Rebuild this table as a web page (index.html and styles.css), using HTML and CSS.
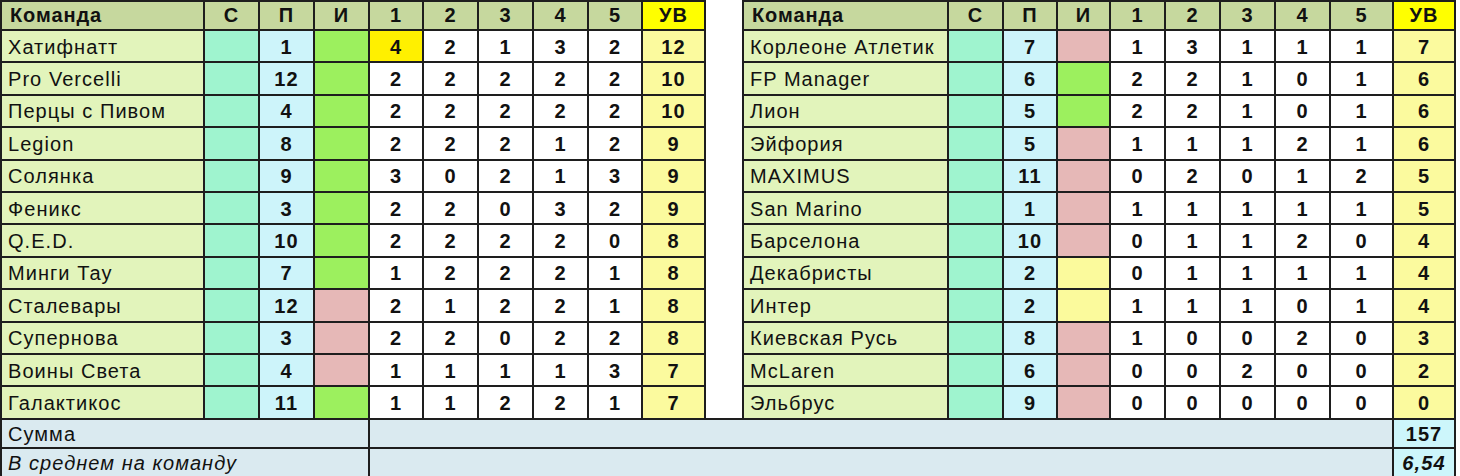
FILE: index.html
```html
<!DOCTYPE html>
<html lang="ru">
<head>
<meta charset="utf-8">
<title>Таблица</title>
<link rel="stylesheet" href="styles.css">
</head>
<body>
<div class="sheet">
  <!-- header -->
  <div class="cell head name first top">Команда</div><div class="cell head top">С</div><div class="cell head top">П</div><div class="cell head top">И</div><div class="cell head top">1</div><div class="cell head top">2</div><div class="cell head top">3</div><div class="cell head top">4</div><div class="cell head top">5</div><div class="cell head uvh top">УВ</div>
  <div class="gap"></div>
  <div class="cell head name right top">Команда</div><div class="cell head top">С</div><div class="cell head top">П</div><div class="cell head top">И</div><div class="cell head top">1</div><div class="cell head top">2</div><div class="cell head top">3</div><div class="cell head top">4</div><div class="cell head top">5</div><div class="cell head uvh top">УВ</div>

  <div class="cell name first">Хатифнатт</div><div class="cell c"></div><div class="cell p">1</div><div class="cell ig"></div><div class="cell s hl">4</div><div class="cell s">2</div><div class="cell s">1</div><div class="cell s">3</div><div class="cell s">2</div><div class="cell uv">12</div>
  <div class="gap"></div>
  <div class="cell name right">Корлеоне Атлетик</div><div class="cell c"></div><div class="cell p">7</div><div class="cell ip"></div><div class="cell s">1</div><div class="cell s">3</div><div class="cell s">1</div><div class="cell s">1</div><div class="cell s">1</div><div class="cell uv">7</div>

  <div class="cell name first">Pro Vercelli</div><div class="cell c"></div><div class="cell p">12</div><div class="cell ig"></div><div class="cell s">2</div><div class="cell s">2</div><div class="cell s">2</div><div class="cell s">2</div><div class="cell s">2</div><div class="cell uv">10</div>
  <div class="gap"></div>
  <div class="cell name right">FP Manager</div><div class="cell c"></div><div class="cell p">6</div><div class="cell ig"></div><div class="cell s">2</div><div class="cell s">2</div><div class="cell s">1</div><div class="cell s">0</div><div class="cell s">1</div><div class="cell uv">6</div>

  <div class="cell name first">Перцы с Пивом</div><div class="cell c"></div><div class="cell p">4</div><div class="cell ig"></div><div class="cell s">2</div><div class="cell s">2</div><div class="cell s">2</div><div class="cell s">2</div><div class="cell s">2</div><div class="cell uv">10</div>
  <div class="gap"></div>
  <div class="cell name right">Лион</div><div class="cell c"></div><div class="cell p">5</div><div class="cell ig"></div><div class="cell s">2</div><div class="cell s">2</div><div class="cell s">1</div><div class="cell s">0</div><div class="cell s">1</div><div class="cell uv">6</div>

  <div class="cell name first">Legion</div><div class="cell c"></div><div class="cell p">8</div><div class="cell ig"></div><div class="cell s">2</div><div class="cell s">2</div><div class="cell s">2</div><div class="cell s">1</div><div class="cell s">2</div><div class="cell uv">9</div>
  <div class="gap"></div>
  <div class="cell name right">Эйфория</div><div class="cell c"></div><div class="cell p">5</div><div class="cell ip"></div><div class="cell s">1</div><div class="cell s">1</div><div class="cell s">1</div><div class="cell s">2</div><div class="cell s">1</div><div class="cell uv">6</div>

  <div class="cell name first">Солянка</div><div class="cell c"></div><div class="cell p">9</div><div class="cell ig"></div><div class="cell s">3</div><div class="cell s">0</div><div class="cell s">2</div><div class="cell s">1</div><div class="cell s">3</div><div class="cell uv">9</div>
  <div class="gap"></div>
  <div class="cell name right">MAXIMUS</div><div class="cell c"></div><div class="cell p">11</div><div class="cell ip"></div><div class="cell s">0</div><div class="cell s">2</div><div class="cell s">0</div><div class="cell s">1</div><div class="cell s">2</div><div class="cell uv">5</div>

  <div class="cell name first">Феникс</div><div class="cell c"></div><div class="cell p">3</div><div class="cell ig"></div><div class="cell s">2</div><div class="cell s">2</div><div class="cell s">0</div><div class="cell s">3</div><div class="cell s">2</div><div class="cell uv">9</div>
  <div class="gap"></div>
  <div class="cell name right">San Marino</div><div class="cell c"></div><div class="cell p">1</div><div class="cell ip"></div><div class="cell s">1</div><div class="cell s">1</div><div class="cell s">1</div><div class="cell s">1</div><div class="cell s">1</div><div class="cell uv">5</div>

  <div class="cell name first">Q.E.D.</div><div class="cell c"></div><div class="cell p">10</div><div class="cell ig"></div><div class="cell s">2</div><div class="cell s">2</div><div class="cell s">2</div><div class="cell s">2</div><div class="cell s">0</div><div class="cell uv">8</div>
  <div class="gap"></div>
  <div class="cell name right">Барселона</div><div class="cell c"></div><div class="cell p">10</div><div class="cell ip"></div><div class="cell s">0</div><div class="cell s">1</div><div class="cell s">1</div><div class="cell s">2</div><div class="cell s">0</div><div class="cell uv">4</div>

  <div class="cell name first">Минги Тау</div><div class="cell c"></div><div class="cell p">7</div><div class="cell ig"></div><div class="cell s">1</div><div class="cell s">2</div><div class="cell s">2</div><div class="cell s">2</div><div class="cell s">1</div><div class="cell uv">8</div>
  <div class="gap"></div>
  <div class="cell name right">Декабристы</div><div class="cell c"></div><div class="cell p">2</div><div class="cell iy"></div><div class="cell s">0</div><div class="cell s">1</div><div class="cell s">1</div><div class="cell s">1</div><div class="cell s">1</div><div class="cell uv">4</div>

  <div class="cell name first">Сталевары</div><div class="cell c"></div><div class="cell p">12</div><div class="cell ip"></div><div class="cell s">2</div><div class="cell s">1</div><div class="cell s">2</div><div class="cell s">2</div><div class="cell s">1</div><div class="cell uv">8</div>
  <div class="gap"></div>
  <div class="cell name right">Интер</div><div class="cell c"></div><div class="cell p">2</div><div class="cell iy"></div><div class="cell s">1</div><div class="cell s">1</div><div class="cell s">1</div><div class="cell s">0</div><div class="cell s">1</div><div class="cell uv">4</div>

  <div class="cell name first">Супернова</div><div class="cell c"></div><div class="cell p">3</div><div class="cell ip"></div><div class="cell s">2</div><div class="cell s">2</div><div class="cell s">0</div><div class="cell s">2</div><div class="cell s">2</div><div class="cell uv">8</div>
  <div class="gap"></div>
  <div class="cell name right">Киевская Русь</div><div class="cell c"></div><div class="cell p">8</div><div class="cell ip"></div><div class="cell s">1</div><div class="cell s">0</div><div class="cell s">0</div><div class="cell s">2</div><div class="cell s">0</div><div class="cell uv">3</div>

  <div class="cell name first">Воины Света</div><div class="cell c"></div><div class="cell p">4</div><div class="cell ip"></div><div class="cell s">1</div><div class="cell s">1</div><div class="cell s">1</div><div class="cell s">1</div><div class="cell s">3</div><div class="cell uv">7</div>
  <div class="gap"></div>
  <div class="cell name right">McLaren</div><div class="cell c"></div><div class="cell p">6</div><div class="cell ip"></div><div class="cell s">0</div><div class="cell s">0</div><div class="cell s">2</div><div class="cell s">0</div><div class="cell s">0</div><div class="cell uv">2</div>

  <div class="cell name first">Галактикос</div><div class="cell c"></div><div class="cell p">11</div><div class="cell ig"></div><div class="cell s">1</div><div class="cell s">1</div><div class="cell s">2</div><div class="cell s">2</div><div class="cell s">1</div><div class="cell uv">7</div>
  <div class="gap last"></div>
  <div class="cell name right">Эльбрус</div><div class="cell c"></div><div class="cell p">9</div><div class="cell ip"></div><div class="cell s">0</div><div class="cell s">0</div><div class="cell s">0</div><div class="cell s">0</div><div class="cell s">0</div><div class="cell uv">0</div>

  <!-- footer -->
  <div class="cell foot-label first">Сумма</div><div class="cell foot-fill"></div><div class="cell foot-val">157</div>
  <div class="cell foot-label first avg">В среднем на команду</div><div class="cell foot-fill"></div><div class="cell foot-val avg">6,54</div>
</div>
</body>
</html>
```

FILE: styles.css
```css
html, body {
  margin: 0;
  padding: 0;
  background: #ffffff;
}

.sheet {
  display: grid;
  grid-template-columns: 205px 55px 55px 55px 54px 55px 55px 55px 54px 63px 36px 207px 55px 54px 53px 55px 55px 55px 55px 63px 62px;
  grid-template-rows: 31px repeat(12, 32.4px) 29px 29px;
  width: 1456px;
  font-family: "Liberation Sans", Arial, sans-serif;
  color: #111111;
}

.cell {
  box-sizing: border-box;
  border-right: 2px solid #1e1e1e;
  border-bottom: 2px solid #1e1e1e;
  display: flex;
  align-items: center;
  justify-content: center;
  padding-top: 2px;
  font-size: 20px;
  font-weight: 700;
  letter-spacing: 1.1px;
  background: #ffffff;
  overflow: hidden;
  white-space: nowrap;
}

.cell.top { border-top: 2px solid #1e1e1e; padding-top: 0; }
.cell.first { border-left: 2px solid #1e1e1e; }
.cell.right { border-left: 2px solid #1e1e1e; }

.head {
  background: #c6d89e;
}
.head.uvh { background: #ffff00; }

.name {
  justify-content: flex-start;
  padding-left: 6px;
  font-weight: 400;
  letter-spacing: 1.05px;
  background: #e2f4bb;
}
.head.name {
  font-weight: 700;
  padding-left: 8px;
  letter-spacing: 0.9px;
  background: #c6d89e;
}

.c  { background: #9ff4cf; }
.p  { background: #cdf4fa; }
.ig { background: #9cf05e; }
.ip { background: #e6b8b7; }
.iy { background: #fbfa9c; }

.s { background: #ffffff; }
.s.hl { background: #fff000; }
.uv { background: #fbfa9e; }

.gap {
  background: #ffffff;
}
.gap.last {
  border-bottom: 2px solid #1e1e1e;
  box-sizing: border-box;
}

.foot-label {
  grid-column: span 4;
  justify-content: flex-start;
  padding-left: 6px;
  font-weight: 400;
  letter-spacing: 1.05px;
  background: #daeaf0;
}
.foot-label.avg { font-style: italic; }

.foot-fill {
  grid-column: span 16;
  background: #daeaf0;
}

.foot-val {
  background: #cdf6fb;
}
.foot-val.avg { font-style: italic; }
```
